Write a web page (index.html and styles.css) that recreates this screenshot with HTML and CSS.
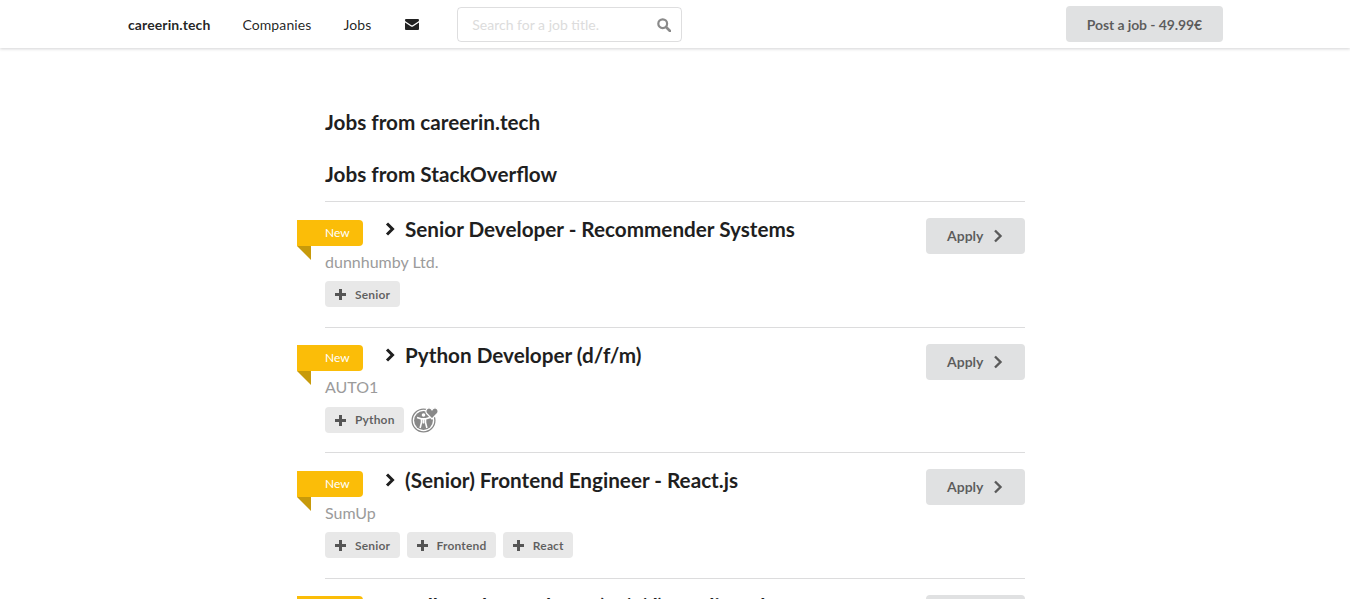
FILE: index.html
```html
<!DOCTYPE html>
<html lang="en">
<head>
  <meta charset="UTF-8" />
  <meta name="viewport" content="width=device-width, initial-scale=1.0"/>
  <title>careerin.tech</title>
  <link rel="stylesheet" href="styles.css">
</head>
<body>
  <header class="top-menu">
    <a class="menu-item brand" href="#">careerin.tech</a>
    <a class="menu-item" href="#">Companies</a>
    <a class="menu-item" href="#">Jobs</a>
    <a class="mail-item" href="#">
      <svg class="mail-icon" viewBox="0 0 14 11"><path d="M1.2 0h11.6C13.5 0 14 .5 14 1.2c0 .5-.3.9-.7 1.2L7.6 6.2c-.4.2-.8.2-1.2 0L.7 2.4C.3 2.1 0 1.7 0 1.2 0 .5.5 0 1.2 0zM0 3.4l6 4c.6.4 1.4.4 2 0l6-4v6.3c0 .7-.5 1.3-1.2 1.3H1.2C.5 11 0 10.4 0 9.7z"/></svg>
    </a>
    <div class="search-box">
      <input type="text" placeholder="Search for a job title.">
      <svg class="search-icon" viewBox="0 0 14 14"><circle cx="5.7" cy="5.7" r="4.4" fill="none" stroke="currentColor" stroke-width="2.2"/><path d="M9 9l4 4" stroke="currentColor" stroke-width="2.6" stroke-linecap="round"/></svg>
    </div>
    <a class="post-btn" href="#">Post a job - 49.99€</a>
  </header>

  <main class="content">
    <h2 class="section-title first">Jobs from careerin.tech</h2>
    <h2 class="section-title">Jobs from StackOverflow</h2>

    <article class="job">
      <span class="ribbon">New</span>
      <div class="job-main">
        <h3 class="job-title"><svg class="chevron" viewBox="0 0 10 14"><path d="M2 1.5L7.5 7 2 12.5" fill="none" stroke="currentColor" stroke-width="3"/></svg>Senior Developer - Recommender Systems</h3>
        <div class="company">dunnhumby Ltd.</div>
        <div class="tags">
          <a class="tag" href="#"><span class="plus"></span>Senior</a>
        </div>
      </div>
      <a class="apply-btn" href="#">Apply<svg class="apply-chevron" viewBox="0 0 10 14"><path d="M2 1.5L7.5 7 2 12.5" fill="none" stroke="currentColor" stroke-width="2.4"/></svg></a>
    </article>

    <article class="job">
      <span class="ribbon">New</span>
      <div class="job-main">
        <h3 class="job-title"><svg class="chevron" viewBox="0 0 10 14"><path d="M2 1.5L7.5 7 2 12.5" fill="none" stroke="currentColor" stroke-width="3"/></svg>Python Developer (d/f/m)</h3>
        <div class="company">AUTO1</div>
        <div class="tags">
          <a class="tag" href="#"><span class="plus"></span>Python</a>
          <svg class="access-icon" viewBox="0 0 28 26">
            <circle cx="12.5" cy="13.5" r="11.4" fill="none" stroke="#888" stroke-width="1.3"/>
            <circle cx="12.5" cy="13.5" r="9.4" fill="#888"/>
            <circle cx="12.5" cy="8" r="1.8" fill="#fff"/>
            <path d="M6 10.5l4.5 1.4v3.6l-1.4 5.5M19 10.5l-4.5 1.4v3.6l1.4 5.5M10.5 11.9h4M12.5 12v4.5" fill="none" stroke="#fff" stroke-width="1.6"/>
            <path d="M21 12L15.7 6.5C14 4.5 15.3.8 18 .8c1.4 0 2.4.8 3 2 .6-1.2 1.6-2 3-2 2.7 0 4 3.7 2.3 5.7z" fill="#888" stroke="#fff" stroke-width="1.2"/>
          </svg>
        </div>
      </div>
      <a class="apply-btn" href="#">Apply<svg class="apply-chevron" viewBox="0 0 10 14"><path d="M2 1.5L7.5 7 2 12.5" fill="none" stroke="currentColor" stroke-width="2.4"/></svg></a>
    </article>

    <article class="job">
      <span class="ribbon">New</span>
      <div class="job-main">
        <h3 class="job-title"><svg class="chevron" viewBox="0 0 10 14"><path d="M2 1.5L7.5 7 2 12.5" fill="none" stroke="currentColor" stroke-width="3"/></svg>(Senior) Frontend Engineer - React.js</h3>
        <div class="company">SumUp</div>
        <div class="tags">
          <a class="tag" href="#"><span class="plus"></span>Senior</a>
          <a class="tag" href="#"><span class="plus"></span>Frontend</a>
          <a class="tag" href="#"><span class="plus"></span>React</a>
        </div>
      </div>
      <a class="apply-btn" href="#">Apply<svg class="apply-chevron" viewBox="0 0 10 14"><path d="M2 1.5L7.5 7 2 12.5" fill="none" stroke="currentColor" stroke-width="2.4"/></svg></a>
    </article>

    <article class="job">
      <span class="ribbon">New</span>
      <div class="job-main">
        <h3 class="job-title"><svg class="chevron" viewBox="0 0 10 14"><path d="M2 1.5L7.5 7 2 12.5" fill="none" stroke="currentColor" stroke-width="3"/></svg>Full Stack Developer (m/f/d) - Online Platform</h3>
        <div class="company">Company</div>
      </div>
      <a class="apply-btn" href="#">Apply<svg class="apply-chevron" viewBox="0 0 10 14"><path d="M2 1.5L7.5 7 2 12.5" fill="none" stroke="currentColor" stroke-width="2.4"/></svg></a>
    </article>
  </main>
</body>
</html>
```
FILE: styles.css
```css
html, body {
  height: 599px;
  overflow: hidden;
}
body {
  margin: 0;
  padding: 0;
  font-family: Lato, 'Liberation Sans', sans-serif;
  font-size: 14px;
  line-height: 20px;
  color: rgba(0, 0, 0, 0.87);
  background-color: #fff;
}
a {
  color: inherit;
  text-decoration: none;
}
.top-menu {
  display: flex;
  align-items: center;
  height: 48px;
  padding: 0 127px 0 112px;
  background-color: #fff;
  box-shadow: 0 1px 3px 0 rgba(34, 36, 38, 0.2);
}
.menu-item {
  padding: 1px 16px 0;
  letter-spacing: 0.1px;
}
.brand {
  font-weight: 700;
}
.mail-item {
  display: flex;
  padding-left: 18px;
  padding-right: 38px;
}
.mail-icon {
  width: 14px;
  height: 11px;
  fill: #222;
}
.search-box {
  display: flex;
  align-items: center;
  width: 225px;
  height: 35px;
  box-sizing: border-box;
  border: 1px solid rgba(34, 36, 38, 0.15);
  border-radius: 4px;
  padding: 0 10px 0 14px;
  margin-top: 1px;
}
.search-box input {
  flex: 1;
  min-width: 0;
  border: none;
  outline: none;
  padding: 0;
  font: inherit;
}
.search-box input::placeholder {
  color: #dcdcdc;
}
.search-icon {
  width: 14px;
  height: 14px;
  color: #8a8a8a;
}
.post-btn {
  margin-left: auto;
  padding: 1px 21px 0;
  height: 35px;
  line-height: 36px;
  border-radius: 4px;
  background-color: #e0e1e2;
  color: rgba(0, 0, 0, 0.6);
  font-weight: 700;
  letter-spacing: -0.1px;
}
.content {
  width: 700px;
  margin: 0 auto;
}
.section-title {
  margin: 0;
  padding-top: 24px;
  font-size: 20.7px;
  line-height: 28px;
  font-weight: 700;
  color: #1f1f1f;
}
.section-title.first {
  padding-top: 60px;
}
.job {
  position: relative;
  display: flex;
  justify-content: space-between;
  align-items: flex-start;
  box-sizing: border-box;
  height: 125.5px;
  padding-top: 16px;
  border-top: 1px solid #dcdcdd;
}
.section-title + .job {
  margin-top: 13.3px;
}
.ribbon {
  position: absolute;
  top: 17.4px;
  left: -28px;
  width: 66px;
  height: 26px;
  box-sizing: border-box;
  padding-left: 28px;
  line-height: 26px;
  font-size: 12px;
  color: #fff;
  background-color: #fbbd08;
  border-radius: 0 4px 4px 0;
}
.ribbon::after {
  content: "";
  position: absolute;
  top: 100%;
  left: 0;
  border-style: solid;
  border-width: 0 14px 14px 0;
  border-color: transparent #c79a0b transparent transparent;
}
.job-title {
  display: flex;
  align-items: center;
  margin: -1px 0 0;
  padding-left: 60px;
  font-size: 20.7px;
  line-height: 24px;
  font-weight: 700;
  color: #1f1f1f;
}
.chevron {
  width: 10px;
  height: 14px;
  margin-right: 10px;
}
.company {
  margin-top: 8.4px;
  font-size: 16px;
  line-height: 24px;
  color: #9b9b9b;
}
.tags {
  display: flex;
  align-items: center;
  gap: 7px;
  margin-top: 7.6px;
}
.tag {
  display: flex;
  align-items: center;
  height: 26px;
  padding: 1px 9.5px 0 10px;
  box-sizing: border-box;
  border-radius: 4px;
  background-color: #e8e8e8;
  color: rgba(0, 0, 0, 0.6);
  font-size: 12px;
  font-weight: 700;
  letter-spacing: 0.15px;
}
.plus {
  position: relative;
  width: 11px;
  height: 11px;
  margin-right: 9px;
}
.plus::before,
.plus::after {
  content: "";
  position: absolute;
  background-color: #555;
}
.plus::before {
  left: 0;
  top: 4px;
  width: 11px;
  height: 3px;
}
.plus::after {
  left: 4px;
  top: 0;
  width: 3px;
  height: 11px;
}
.access-icon {
  width: 28px;
  height: 26px;
}
.apply-btn {
  display: flex;
  align-items: center;
  height: 36px;
  width: 99px;
  box-sizing: border-box;
  padding-left: 21px;
  border-radius: 4px;
  background-color: #e0e1e2;
  color: rgba(0, 0, 0, 0.6);
  font-weight: 700;
}
.apply-chevron {
  width: 10px;
  height: 14px;
  margin-left: 10px;
}
```
